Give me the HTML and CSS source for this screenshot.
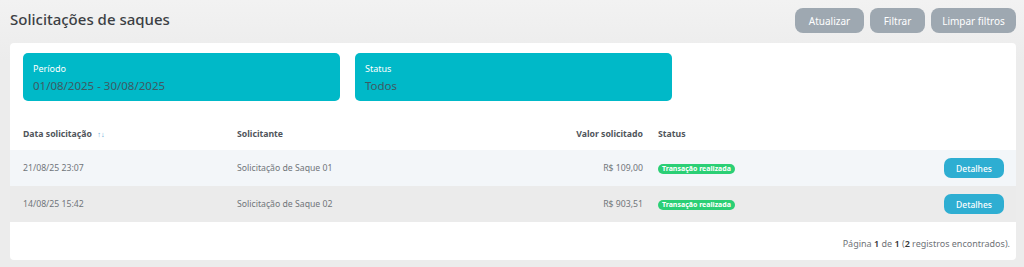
FILE: index.html
```html
<!DOCTYPE html>
<html lang="pt-BR">
<head>
<meta charset="UTF-8" />
<meta name="viewport" content="width=device-width, initial-scale=1" />
<title>Solicitações de saques</title>
<link rel="stylesheet" href="styles.css">
</head>
<body>

<div class="page">
  <div class="top">
    <h1>Solicitações de saques</h1>
    <div class="actions">
      <button class="btn-gray btn-refresh">Atualizar</button>
      <button class="btn-gray btn-filter">Filtrar</button>
      <button class="btn-gray btn-clear">Limpar filtros</button>
    </div>
  </div>

  <div class="card">
    <div class="filters">
      <div class="filter-box">
        <div class="filter-label">Período</div>
        <div class="filter-value">01/08/2025 - 30/08/2025</div>
      </div>
      <div class="filter-box">
        <div class="filter-label">Status</div>
        <div class="filter-value">Todos</div>
      </div>
    </div>

    <table class="list">
      <colgroup>
        <col class="w-date">
        <col class="w-name">
        <col class="w-value">
        <col class="w-status">
        <col>
      </colgroup>
      <thead>
        <tr>
          <th class="col-date">Data solicitação <span class="sort">↑↓</span></th>
          <th>Solicitante</th>
          <th class="col-value">Valor solicitado</th>
          <th>Status</th>
          <th></th>
        </tr>
      </thead>
      <tbody>
        <tr class="row-a">
          <td class="col-date">21/08/25 23:07</td>
          <td>Solicitação de Saque 01</td>
          <td class="col-value">R$ 109,00</td>
          <td><span class="badge">Transação realizada</span></td>
          <td class="col-action"><button class="btn-details">Detalhes</button></td>
        </tr>
        <tr class="row-b">
          <td class="col-date">14/08/25 15:42</td>
          <td>Solicitação de Saque 02</td>
          <td class="col-value">R$ 903,51</td>
          <td><span class="badge">Transação realizada</span></td>
          <td class="col-action"><button class="btn-details">Detalhes</button></td>
        </tr>
      </tbody>
    </table>

    <div class="pager">Página <b>1</b> de <b>1</b> (<b>2</b> registros encontrados).</div>
  </div>
</div>

</body>
</html>
```

FILE: styles.css
```css
body {
  margin: 0;
  font-family: "Noto Sans", "Open Sans", sans-serif;
  background: linear-gradient(#f2f2f2, #ececec 60px, #ececec);
  color: #555;
}
.page {
  padding: 8px 8px 7px 10px;
}
.top {
  display: flex;
  justify-content: space-between;
  align-items: flex-start;
  height: 35px;
}
h1 {
  margin: 0;
  padding-top: 1px;
  font-size: 15px;
  font-weight: 500;
  color: #3c3f44;
}
.actions {
  display: flex;
  gap: 6px;
}
.btn-gray {
  background-color: #9ea8b1;
  color: white;
  border: none;
  height: 25px;
  padding: 0;
  border-radius: 8px;
  font-family: inherit;
  font-size: 10px;
  font-weight: 400;
  cursor: pointer;
}
.btn-refresh { width: 69px; }
.btn-filter { width: 55px; }
.btn-clear { width: 85px; }
.card {
  background: white;
  border-radius: 4px;
  padding-top: 10px;
}
.filters {
  display: flex;
  gap: 15px;
  padding: 0 13px;
}
.filter-box {
  width: 317px;
  height: 48px;
  box-sizing: border-box;
  background: #00b9c8;
  border-radius: 5px;
  padding: 10px 10px 0;
}
.filter-label {
  color: white;
  font-size: 9px;
  line-height: 12px;
}
.filter-value {
  color: #3f5a63;
  font-size: 11.5px;
  line-height: 18px;
  margin-top: 2px;
}
.list {
  width: 100%;
  table-layout: fixed;
  border-collapse: collapse;
  margin-top: 21px;
  font-size: 8.7px;
}
.w-date { width: 227px; }
.w-name { width: 286px; }
.w-value { width: 135px; }
.w-status { width: 200px; }
.list th {
  text-align: left;
  font-weight: 700;
  color: #50555b;
  height: 28px;
  vertical-align: top;
  padding: 6px 0 0;
  box-sizing: border-box;
}
.list td {
  height: 36px;
  color: #70757a;
  padding: 0;
}
.sort {
  color: #5d9fd6;
  font-size: 7.5px;
  font-weight: 400;
  margin-left: 3px;
}
.list .col-date { padding-left: 13px; }
.list .col-value { text-align: right; padding-right: 15px; }
.list .col-action { text-align: right; padding-right: 12px; }
.row-a { background: #f3f6f9; }
.row-b { background: #ebebeb; }
.badge {
  display: inline-block;
  background: #2bcf75;
  color: white;
  font-size: 7px;
  font-weight: 700;
  line-height: 10px;
  padding: 0 4px;
  border-radius: 6px;
}
.btn-details {
  background-color: #2eaed2;
  color: white;
  border: none;
  height: 20px;
  width: 60px;
  border-radius: 7px;
  font-family: inherit;
  font-size: 8.5px;
  font-weight: 500;
  cursor: pointer;
}
.pager {
  text-align: right;
  font-size: 9px;
  color: #6f7378;
  padding: 15px 6px 0 0;
  height: 23px;
}
.pager b {
  color: #333;
  font-weight: 600;
}
```
